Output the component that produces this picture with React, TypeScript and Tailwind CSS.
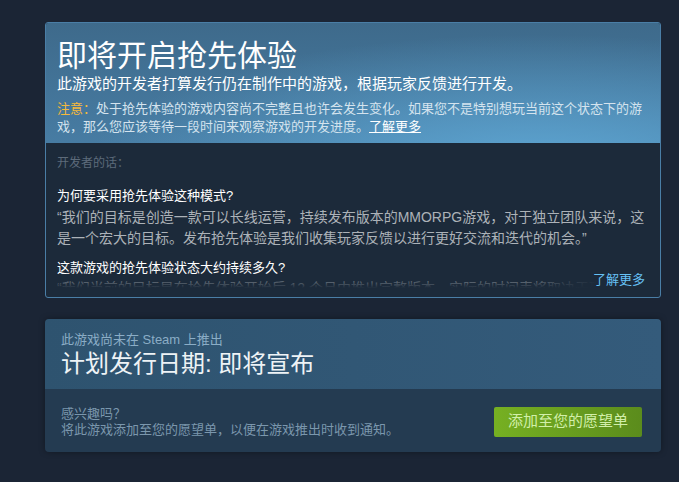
const cjk = "font-['Arial','Liberation_Sans','Noto_Sans_CJK_SC',sans-serif]";

function EarlyAccessBox() {
  return (
    <div className="rounded-[3px] border border-[#4a7ea6] bg-[#1c2a3a] overflow-hidden">
      <div className="bg-[radial-gradient(ellipse_at_80%_120%,#5ea6d3_0%,rgba(94,166,211,0)_65%),linear-gradient(180deg,#3e6a8b_0%,#477ca3_100%)] px-[11px] pt-[16px] pb-[7px]">
        <h1 className="text-[30px] leading-[34px] text-white">即将开启抢先体验</h1>
        <p className="mt-[1px] text-[15px] leading-[20px] text-white">
          此游戏的开发者打算发行仍在制作中的游戏，根据玩家反馈进行开发。
        </p>
        <p className="mt-[6px] text-[13px] leading-[18px] text-[#d4e3ee]">
          <span className="text-[#f5b93b]">注意：</span>
          处于抢先体验的游戏内容尚不完整且也许会发生变化。如果您不是特别想玩当前这个状态下的游戏，那么您应该等待一段时间来观察游戏的开发进度。
          <span className="underline text-white">了解更多</span>
        </p>
      </div>
      <div className="relative px-[11px] pb-[9px]">
        <div className="h-[145px] overflow-hidden pt-[12px]">
          <p className="text-[12px] leading-[16px] text-[#5d6b7a]">开发者的话：</p>
          <p className="mt-[16px] text-[13px] leading-[18px] text-white">为何要采用抢先体验这种模式?</p>
          <p className="mt-[2px] text-[14px] leading-[21px] text-[#acb2b8]">
            “我们的目标是创造一款可以长线运营，持续发布版本的MMORPG游戏，对于独立团队来说，这是一个宏大的目标。发布抢先体验是我们收集玩家反馈以进行更好交流和迭代的机会。”
          </p>
          <p className="mt-[10px] text-[13px] leading-[18px] text-white">这款游戏的抢先体验状态大约持续多久?</p>
          <p className="mt-[1px] text-[14px] leading-[21px] text-[#acb2b8]">
            “我们当前的目标是在抢先体验开始后 12 个月内推出完整版本，实际的时间表将取决于玩家的反馈和开发进度。”
          </p>
        </div>
        <div className="pointer-events-none absolute left-0 right-0 bottom-[9px] h-[14px] bg-[linear-gradient(180deg,rgba(28,42,58,0)_0%,#1c2a3a_100%)]" />
        <span className="absolute right-0 bottom-[8px] pl-[60px] pr-[15px] text-[13px] leading-[18px] text-[#66c0f4] bg-[linear-gradient(90deg,rgba(28,42,58,0)_0%,#1c2a3a_50%)]">
          了解更多
        </span>
      </div>
    </div>
  );
}

function ReleaseBox() {
  return (
    <div className="rounded-[4px] overflow-hidden shadow-[0_0_6px_rgba(0,0,0,0.35)]">
      <div className="bg-[linear-gradient(90deg,#2e536f_0%,#345b7b_100%)] px-[16px] pt-[12px] h-[70px]">
        <p className="text-[13px] leading-[17px] text-[#8badc6]">此游戏尚未在 Steam 上推出</p>
        <p className="mt-[1px] text-[24px] leading-[30px] text-[#eef3f6]">计划发行日期: 即将宣布</p>
      </div>
      <div className="flex items-center justify-between bg-[#243b51] pl-[16px] pr-[19px] h-[63px] pt-[2px]">
        <div className="text-[13px] leading-[16px] text-[#7b97ad]">
          <p>感兴趣吗？</p>
          <p>将此游戏添加至您的愿望单，以便在游戏推出时收到通知。</p>
        </div>
        <div className="flex h-[30px] w-[148px] items-center justify-center rounded-[2px] bg-[linear-gradient(90deg,#76b022_0%,#5b8c1c_100%)] text-[15px] text-[#d2efa9]">
          添加至您的愿望单
        </div>
      </div>
    </div>
  );
}

export default function App() {
  return (
    <div className={`min-h-[482px] w-[679px] bg-[#1b2535] pl-[45px] pr-[18px] pt-[22px] ${cjk}`}>
      <EarlyAccessBox />
      <div className="mt-[21px]">
        <ReleaseBox />
      </div>
    </div>
  );
}
